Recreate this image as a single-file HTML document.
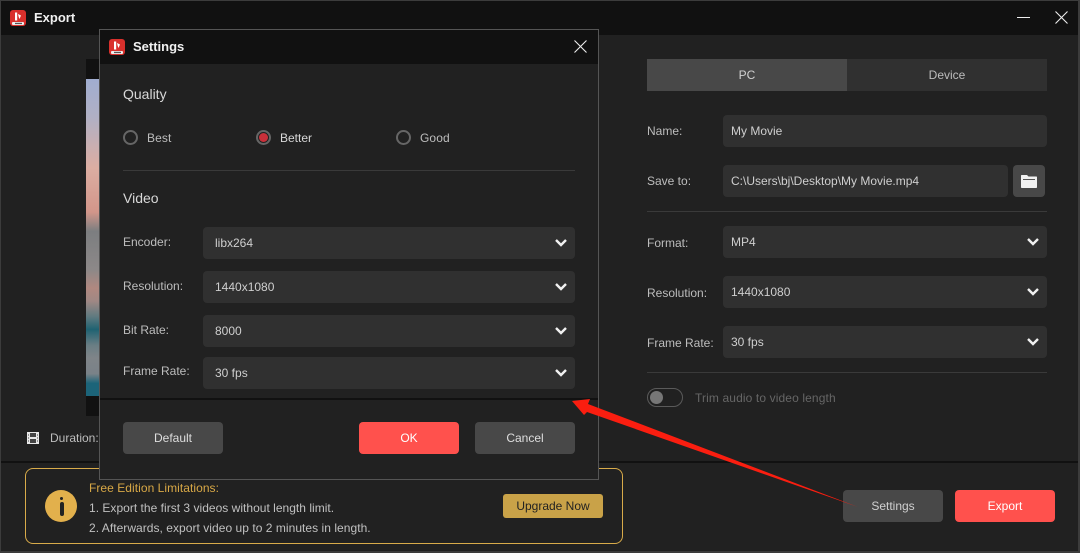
<!DOCTYPE html>
<html>
<head>
<meta charset="utf-8">
<style>
html,body{margin:0;padding:0;background:#212121}
#p{position:relative;width:1080px;height:553px;overflow:hidden;background:#212121;font-family:"Liberation Sans",sans-serif;font-size:12px;color:#c8c8c8}
#p div,#p span{position:absolute;box-sizing:border-box;white-space:nowrap}
.lbl{line-height:16px;color:#bdbdbd}
.f{background:#303030;border-radius:4px;color:#cfcfcf;line-height:32px;padding-left:8px}
.btn{border-radius:4px;text-align:center;color:#dedede;background:#484848;line-height:32px}
.red{background:#ff514d;color:#fff}
.hr{background:#3a3a3a;height:1px}
svg{position:absolute;overflow:visible}
.ch{fill:none;stroke:#f0f0f0;stroke-width:2.4}
</style>
</head>
<body>
<div id="p">
<div style="left:0;top:0;width:1080px;height:553px;border:1px solid #3c3c3c;border-bottom-width:2px;border-right-width:2px"></div>
<div style="left:1px;top:1px;width:1077px;height:34px;background:#111"></div>

<svg style="left:10px;top:10px" width="16" height="16" viewBox="0 0 16 16"><rect width="16" height="16" rx="3" fill="#d9302c"/><path d="M5 2.500h2.200v8H5zM8 4l3 1.500-1.500 3.500-.8-2z" fill="#fff"/><rect x="2" y="12" width="12" height="3" rx="1" fill="#eee"/><rect x="5" y="12.800" width="7" height="1.300" fill="#555"/></svg>
<div style="left:34px;top:9px;font-size:13px;font-weight:bold;color:#f0f0f0;line-height:17px">Export</div>
<div style="left:1017px;top:17px;width:13px;height:1px;background:#eee"></div>
<svg style="left:1055px;top:11px" width="13" height="13" viewBox="0 0 13 13"><path d="M.5.5l12 12M12.500.5l-12 12" stroke="#eee" stroke-width="1.100" fill="none"/></svg>

<div style="left:86px;top:59px;width:14px;height:357px;background:#111"></div>
<div style="left:86px;top:79px;width:14px;height:317px;background:linear-gradient(180deg,#a0add0 0%,#b0b0c4 12%,#dcaea2 28%,#d2968a 42%,#7c7e80 48%,#8c8888 60%,#b08880 66%,#a08884 70%,#5f7a80 75%,#1f6272 79%,#6a7e84 84%,#7f8488 88%,#7a8288 93%,#1c6479 96%,#1c6479 100%)"></div>

<svg style="left:27px;top:432px" width="12" height="12" viewBox="0 0 12 12"><rect x="0" y="0" width="12" height="12" fill="#e8e8e8"/><rect x="3" y="1" width="6" height="4" fill="#444"/><rect x="3" y="7" width="6" height="4" fill="#444"/><path d="M1 3h1M1 6h1M1 9h1M10 3h1M10 6h1M10 9h1" stroke="#444"/></svg>
<div class="lbl" style="left:50px;top:430px">Duration:</div>

<div class="btn" style="left:647px;top:59px;width:200px;height:32px;border-radius:0;background:#484848;color:#d0d0d0">PC</div>
<div class="btn" style="left:847px;top:59px;width:200px;height:32px;border-radius:0;background:#303030;color:#bdbdbd">Device</div>

<div class="lbl" style="left:647px;top:123px">Name:</div>
<div class="f" style="left:723px;top:115px;width:324px;height:32px">My Movie</div>
<div class="lbl" style="left:647px;top:173px">Save to:</div>
<div class="f" style="left:723px;top:165px;width:285px;height:32px">C:\Users\bj\Desktop\My Movie.mp4</div>
<div class="btn" style="left:1013px;top:165px;width:32px;height:32px"></div>
<svg style="left:1021px;top:175px" width="16" height="13" viewBox="0 0 16 13"><path d="M0 .700Q0 0 .7 0H6L7.500 1.500H15.300Q16 1.500 16 2.200V12.300Q16 13 15.300 13H.7Q0 13 0 12.300Z" fill="#f2f2f2"/><rect x="2" y="4" width="12" height="1" fill="#555"/></svg>
<div class="hr" style="left:647px;top:211px;width:400px"></div>

<div class="lbl" style="left:647px;top:235px">Format:</div>
<div class="f" style="left:723px;top:226px;width:324px;height:32px">MP4</div>
<svg style="left:1027px;top:238px" width="12" height="8" viewBox="0 0 12 8"><path class="ch" d="M1 1l5 5 5-5"/></svg>
<div class="lbl" style="left:647px;top:285px">Resolution:</div>
<div class="f" style="left:723px;top:276px;width:324px;height:32px">1440x1080</div>
<svg style="left:1027px;top:288px" width="12" height="8" viewBox="0 0 12 8"><path class="ch" d="M1 1l5 5 5-5"/></svg>
<div class="lbl" style="left:647px;top:335px">Frame Rate:</div>
<div class="f" style="left:723px;top:326px;width:324px;height:32px">30 fps</div>
<svg style="left:1027px;top:338px" width="12" height="8" viewBox="0 0 12 8"><path class="ch" d="M1 1l5 5 5-5"/></svg>
<div class="hr" style="left:647px;top:372px;width:400px"></div>

<div style="left:647px;top:388px;width:36px;height:19px;border:1px solid #5a5a5a;border-radius:10px"></div>
<div style="left:650px;top:391px;width:13px;height:13px;border-radius:50%;background:#777"></div>
<div class="lbl" style="left:695px;top:390px;color:#666;letter-spacing:.12px">Trim audio to video length</div>

<div style="left:1px;top:461px;width:1077px;height:2px;background:#111"></div>
<div style="left:25px;top:468px;width:598px;height:76px;border:1px solid #d8ab4a;border-radius:8px"></div>
<div style="left:45px;top:490px;width:32px;height:32px;border-radius:50%;background:#e2b04c"></div>
<div style="left:60px;top:497px;width:3px;height:3px;background:#222;border-radius:50%"></div>
<div style="left:60px;top:502px;width:4px;height:14px;background:#222;border-radius:2px"></div>
<div class="lbl" style="left:89px;top:480px;color:#d8a846;letter-spacing:.05px">Free Edition Limitations:</div>
<div class="lbl" style="left:89px;top:500px;color:#c0c0c0;letter-spacing:.02px">1. Export the first 3 videos without length limit.</div>
<div class="lbl" style="left:89px;top:520px;color:#c0c0c0;letter-spacing:.04px">2. Afterwards, export video up to 2 minutes in length.</div>
<div class="btn" style="left:503px;top:494px;width:100px;height:24px;line-height:24px;background:#c9a248;color:#222;border-radius:3px">Upgrade Now</div>
<div class="btn" style="left:843px;top:490px;width:100px;height:32px;color:#d0d0d0">Settings</div>
<div class="btn red" style="left:955px;top:490px;width:100px;height:32px">Export</div>

<!-- Settings dialog -->
<div style="left:99px;top:29px;width:500px;height:451px;background:#212121;border:1px solid #555"></div>
<div style="left:100px;top:30px;width:498px;height:34px;background:#111"></div>
<svg style="left:109px;top:39px" width="16" height="16" viewBox="0 0 16 16"><rect width="16" height="16" rx="3" fill="#d9302c"/><path d="M5 2.500h2.200v8H5zM8 4l3 1.500-1.500 3.500-.8-2z" fill="#fff"/><rect x="2" y="12" width="12" height="3" rx="1" fill="#eee"/><rect x="5" y="12.800" width="7" height="1.300" fill="#555"/></svg>
<div style="left:133px;top:38px;font-size:13px;font-weight:bold;color:#f0f0f0;line-height:17px">Settings</div>
<svg style="left:574px;top:40px" width="13" height="13" viewBox="0 0 13 13"><path d="M.5.5l12 12M12.500.5l-12 12" stroke="#eee" stroke-width="1.100" fill="none"/></svg>

<div style="left:123px;top:86px;font-size:14px;line-height:17px;color:#d8d8d8">Quality</div>
<div style="left:123px;top:130px;width:15px;height:15px;border:2px solid #666;border-radius:50%"></div>
<div class="lbl" style="left:147px;top:130px;letter-spacing:.1px">Best</div>
<div style="left:256px;top:130px;width:15px;height:15px;border:2px solid #666;border-radius:50%"></div>
<div style="left:259px;top:133px;width:9px;height:9px;background:#c9303a;border-radius:50%"></div>
<div class="lbl" style="left:280px;top:130px;color:#d8d8d8">Better</div>
<div style="left:396px;top:130px;width:15px;height:15px;border:2px solid #666;border-radius:50%"></div>
<div class="lbl" style="left:420px;top:130px;letter-spacing:.1px">Good</div>
<div class="hr" style="left:123px;top:170px;width:452px"></div>
<div style="left:123px;top:190px;font-size:14px;line-height:17px;color:#d8d8d8">Video</div>

<div class="lbl" style="left:123px;top:234px">Encoder:</div>
<div class="f" style="left:203px;top:227px;width:372px;height:32px;padding-left:12px">libx264</div>
<svg style="left:555px;top:239px" width="12" height="8" viewBox="0 0 12 8"><path class="ch" d="M1 1l5 5 5-5"/></svg>
<div class="lbl" style="left:123px;top:278px">Resolution:</div>
<div class="f" style="left:203px;top:271px;width:372px;height:32px;padding-left:12px">1440x1080</div>
<svg style="left:555px;top:283px" width="12" height="8" viewBox="0 0 12 8"><path class="ch" d="M1 1l5 5 5-5"/></svg>
<div class="lbl" style="left:123px;top:322px">Bit Rate:</div>
<div class="f" style="left:203px;top:315px;width:372px;height:32px;padding-left:12px">8000</div>
<svg style="left:555px;top:327px" width="12" height="8" viewBox="0 0 12 8"><path class="ch" d="M1 1l5 5 5-5"/></svg>
<div class="lbl" style="left:123px;top:363px">Frame Rate:</div>
<div class="f" style="left:203px;top:357px;width:372px;height:32px;padding-left:12px">30 fps</div>
<svg style="left:555px;top:369px" width="12" height="8" viewBox="0 0 12 8"><path class="ch" d="M1 1l5 5 5-5"/></svg>

<div style="left:100px;top:398px;width:498px;height:2px;background:#111"></div>
<div class="btn" style="left:123px;top:422px;width:100px;height:32px">Default</div>
<div class="btn red" style="left:359px;top:422px;width:100px;height:32px">OK</div>
<div class="btn" style="left:475px;top:422px;width:100px;height:32px">Cancel</div>

<svg style="left:0;top:0" width="1080" height="553" viewBox="0 0 1080 553"><path d="M572 401L590 399L588 404L858 507L587 412L584 415Z" fill="#fa1e10"/></svg>
</div>
</body>
</html>
